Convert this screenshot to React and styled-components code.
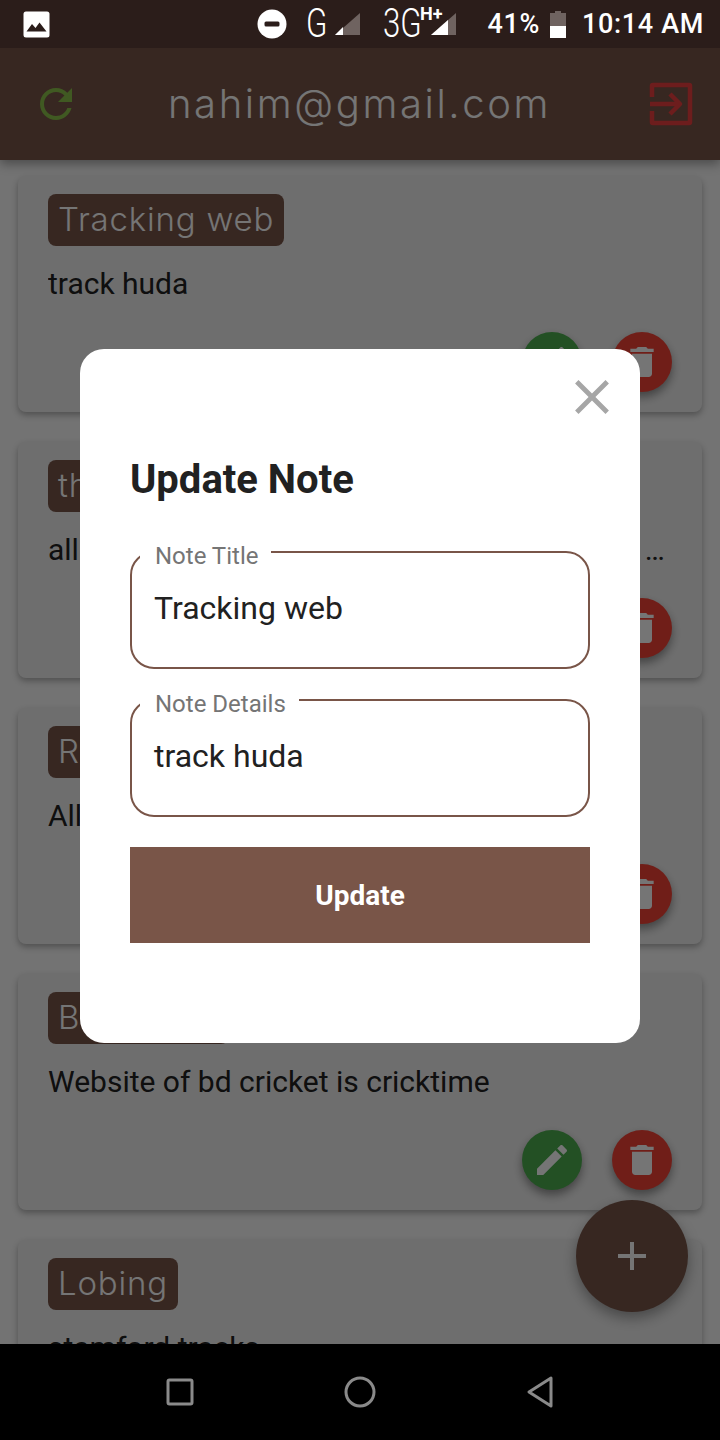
import React from "react";
import styled, { createGlobalStyle } from "styled-components";

const Global = createGlobalStyle`
  html, body { margin: 0; padding: 0; background: #000; }
  * { box-sizing: border-box; }
  body { font-family: Roboto, "Liberation Sans", sans-serif; }
`;

const Screen = styled.div`
  position: relative;
  width: 720px;
  height: 1440px;
  overflow: hidden;
  display: flex;
  flex-direction: column;
  background: #fafafa;
`;

const StatusBar = styled.div`
  position: relative;
  z-index: 3;
  flex: 0 0 48px;
  height: 48px;
  display: flex;
  align-items: center;
  padding: 0 16px 0 23px;
  background: #2b1d1a;
  color: #fff;
`;

const StatusSpacer = styled.div`
  flex: 1;
`;

const StatusSlot = styled.span`
  display: flex;
  align-items: center;
  margin-left: ${(p) => p.$ml || 0}px;
  line-height: 1;
`;

const StatusText = styled.span`
  font-size: 27px;
  font-weight: 500;
  line-height: 1;
  letter-spacing: 0.65px;
`;

const NetText = styled.span`
  display: inline-block;
  font-size: 40px;
  font-weight: 300;
  line-height: 1;
  transform: scaleX(0.78);
  transform-origin: left center;
  width: ${(p) => p.$w}px;
`;

const HPlus = styled.span`
  position: absolute;
  top: 5px;
  left: 420px;
  font-size: 18px;
  font-weight: 700;
  line-height: 1;
`;

const AppBar = styled.header`
  position: relative;
  z-index: 1;
  flex: 0 0 112px;
  display: flex;
  align-items: center;
  justify-content: space-between;
  padding: 0 27px 0 32px;
  background: #795548;
  box-shadow: 0 4px 10px rgba(0, 0, 0, 0.35);
`;

const AppTitle = styled.h1`
  margin: 0 10px 2px 0;
  font-family: Inter, "Open Sans", sans-serif;
  font-size: 40px;
  font-weight: 300;
  letter-spacing: 2.6px;
  color: #fff;
`;

const NoteList = styled.main`
  flex: 1;
  min-height: 0;
  overflow: hidden;
  display: flex;
  flex-direction: column;
  gap: 30px;
  padding: 16px 18px 0;
`;

const Card = styled.article`
  flex: 0 0 236px;
  display: flex;
  flex-direction: column;
  padding: 18px 30px 20px;
  background: #f0f0f0;
  border-radius: 8px;
  box-shadow: 0 3px 6px rgba(0, 0, 0, 0.3);
`;

const Pill = styled.div`
  align-self: flex-start;
  height: 52px;
  display: flex;
  align-items: center;
  padding: 0 10px 2px;
  border-radius: 8px;
  background: #795548;
  color: #fff;
  font-family: Inter, "Open Sans", sans-serif;
  font-size: 33px;
  font-weight: 300;
  letter-spacing: 0.8px;
`;

const NoteBody = styled.p`
  margin: 20px 0 0;
  font-size: 30px;
  line-height: 35px;
  color: #212121;
  white-space: nowrap;
  overflow: hidden;
  text-overflow: ellipsis;
`;

const CardActions = styled.div`
  margin-top: auto;
  display: flex;
  justify-content: flex-end;
  gap: 30px;
`;

const RoundButton = styled.button`
  width: 60px;
  height: 60px;
  padding: 0;
  border: 0;
  border-radius: 50%;
  display: flex;
  align-items: center;
  justify-content: center;
  color: #fff;
  background: ${(p) => p.$bg};
  box-shadow: 0 5px 10px rgba(0, 0, 0, 0.4);
`;

const Fab = styled.button`
  position: absolute;
  left: 576px;
  top: 1200px;
  width: 112px;
  height: 112px;
  padding: 0;
  border: 0;
  border-radius: 50%;
  display: flex;
  align-items: center;
  justify-content: center;
  color: #fff;
  background: #795548;
  box-shadow: 0 6px 14px rgba(0, 0, 0, 0.35);
`;

const NavBar = styled.nav`
  position: relative;
  z-index: 3;
  flex: 0 0 96px;
  display: flex;
  align-items: center;
  justify-content: center;
  gap: 150px;
  background: #000;
  color: #8a8a8a;
`;

const Overlay = styled.div`
  position: absolute;
  inset: 0;
  z-index: 2;
  display: flex;
  align-items: center;
  justify-content: center;
  padding: 48px 0 96px;
  background: rgba(0, 0, 0, 0.54);
`;

const Modal = styled.section`
  width: 560px;
  height: 694px;
  display: flex;
  flex-direction: column;
  padding: 19px 50px 0;
  background: #fff;
  border-radius: 24px;
`;

const CloseRow = styled.div`
  display: flex;
  justify-content: flex-end;
  margin-right: -31px;
  color: #a6a6a6;
`;

const ModalTitle = styled.h2`
  margin: 31px 0 0;
  font-size: 40px;
  line-height: 46px;
  font-weight: 700;
  color: #212121;
`;

const Field = styled.fieldset`
  margin: ${(p) => p.$mt}px 0 0;
  padding: 0 22px;
  height: 135px;
  border: 2px solid #795548;
  border-radius: 24px;
  min-width: 0;
`;

const FieldLabel = styled.legend`
  margin-left: -14px;
  padding: 9px 13px 0 15px;
  font-size: 24px;
  line-height: 26px;
  color: #757575;
`;

const FieldValue = styled.div`
  margin-top: 20px;
  font-size: 32px;
  line-height: 38px;
  color: #212121;
`;

const UpdateButton = styled.button`
  margin-top: 30px;
  height: 96px;
  border: 0;
  background: #795548;
  color: #fff;
  font-family: inherit;
  font-size: 28px;
  font-weight: 700;
`;

const Md = ({ d, size, color }) => (
  <svg width={size} height={size} viewBox="0 0 24 24" fill={color || "currentColor"}>
    <path d={d} />
  </svg>
);

const EDIT = "M3 17.25V21h3.75L17.81 9.94l-3.75-3.75L3 17.25zM20.71 7.04c.39-.39.39-1.02 0-1.41l-2.34-2.34c-.39-.39-1.02-.39-1.41 0l-1.83 1.83 3.75 3.75 1.83-1.83z";
const TRASH = "M6 19c0 1.1.9 2 2 2h8c1.1 0 2-.9 2-2V7H6v12zM19 4h-3.5l-1-1h-5l-1 1H5v2h14V4z";
const PLUS = "M19 13h-6v6h-2v-6H5v-2h6V5h2v6h6v2z";
const CLOSE = "M19 6.41L17.59 5 12 10.59 6.41 5 5 6.41 10.59 12 5 17.59 6.41 19 12 13.41 17.59 19 19 17.59 13.41 12z";
const REFRESH = "M17.65 6.35C16.2 4.9 14.21 4 12 4c-4.42 0-7.99 3.58-7.99 8s3.57 8 7.99 8c3.73 0 6.84-2.55 7.73-6h-2.08c-.82 2.33-3.04 4-5.65 4-3.31 0-6-2.69-6-6s2.69-6 6-6c1.66 0 3.14.69 4.22 1.78L13 11h7V4l-2.35 2.35z";

const ImageIcon = () => (
  <svg width="27" height="27" viewBox="0 0 27 27">
    <rect x="0.5" y="0.5" width="26" height="26" rx="2.5" fill="#fff" />
    <path d="M3.5 20.5 L9 13 L12.5 17 L16.5 11.5 L23.5 20.5 Z" fill="#2b1d1a" />
  </svg>
);

const DndIcon = () => (
  <svg width="30" height="30" viewBox="0 0 30 30">
    <circle cx="15" cy="15" r="14.5" fill="#fff" />
    <rect x="7.5" y="12.5" width="15" height="5" rx="1.5" fill="#2b1d1a" />
  </svg>
);

const SignalIcon = ({ level }) => (
  <svg width="27" height="24" viewBox="0 0 27 24">
    <path d="M26 1 V23 H1 Z" fill="#6f6360" />
    <path d={level === "low" ? "M9 15 V23 H1 Z" : "M18 8 V23 H1 Z"} fill="#fff" />
  </svg>
);

const BatteryIcon = () => (
  <svg width="16" height="27" viewBox="0 0 16 27">
    <path d="M5 0 H11 V2 H16 V27 H0 V2 H5 Z" fill="#6f6360" />
    <rect x="0" y="15" width="16" height="12" fill="#fff" />
  </svg>
);

const ExitIcon = () => (
  <svg width="44" height="44" viewBox="0 0 44 44" fill="none" stroke="#ee3f3f" strokeWidth="4.5" strokeLinejoin="round">
    <path d="M3 15 V4 Q3 3 4 3 H40 Q41 3 41 4 V40 Q41 41 40 41 H4 Q3 41 3 40 V29" />
    <path d="M1 22 H30 M21 12 L31 22 L21 32" />
  </svg>
);

const NavSquare = () => (
  <svg width="28" height="28" viewBox="0 0 28 28" fill="none" stroke="currentColor" strokeWidth="3">
    <rect x="2" y="2" width="24" height="24" rx="1.5" />
  </svg>
);
const NavCircle = () => (
  <svg width="32" height="32" viewBox="0 0 32 32" fill="none" stroke="currentColor" strokeWidth="3">
    <circle cx="16" cy="16" r="14" />
  </svg>
);
const NavBack = () => (
  <svg width="28" height="32" viewBox="0 0 28 32" fill="none" stroke="currentColor" strokeWidth="3" strokeLinejoin="round">
    <path d="M25 2 V30 L3 16 Z" />
  </svg>
);

const notes = [
  { title: "Tracking web", body: "track huda" },
  { title: "this is the note", body: "all of the important things are written down I\u00a0 Wonderful" },
  { title: "Rifat", body: "All" },
  { title: "Bd cricket", body: "Website of bd cricket is cricktime" },
  { title: "Lobing", body: "stamford tracks" },
];

export default function App() {
  return (
    <Screen>
      <Global />
      <StatusBar>
        <ImageIcon />
        <StatusSpacer />
        <DndIcon />
        <StatusSlot $ml={19}><NetText $w={23}>G</NetText></StatusSlot>
        <StatusSlot $ml={5}><SignalIcon level="low" /></StatusSlot>
        <StatusSlot $ml={22}><NetText $w={42}>3G</NetText></StatusSlot>
        <HPlus>H+</HPlus>
        <StatusSlot $ml={5}><SignalIcon level="high" /></StatusSlot>
        <StatusSlot $ml={31}><StatusText>41%</StatusText></StatusSlot>
        <StatusSlot $ml={10}><BatteryIcon /></StatusSlot>
        <StatusSlot $ml={16}><StatusText>10:14 AM</StatusText></StatusSlot>
      </StatusBar>

      <AppBar>
        <Md d={REFRESH} size={48} color="#8bc34a" />
        <AppTitle>nahim@gmail.com</AppTitle>
        <ExitIcon />
      </AppBar>

      <NoteList>
        {notes.map((n) => (
          <Card key={n.title}>
            <Pill>{n.title}</Pill>
            <NoteBody>{n.body}</NoteBody>
            <CardActions>
              <RoundButton $bg="#4caf50"><Md d={EDIT} size={40} /></RoundButton>
              <RoundButton $bg="#f44336"><Md d={TRASH} size={40} /></RoundButton>
            </CardActions>
          </Card>
        ))}
      </NoteList>

      <Fab><Md d={PLUS} size={48} /></Fab>

      <NavBar>
        <NavSquare />
        <NavCircle />
        <NavBack />
      </NavBar>

      <Overlay>
        <Modal>
          <CloseRow><Md d={CLOSE} size={58} /></CloseRow>
          <ModalTitle>Update Note</ModalTitle>
          <Field $mt={31}>
            <FieldLabel>Note Title</FieldLabel>
            <FieldValue>Tracking web</FieldValue>
          </Field>
          <Field $mt={13}>
            <FieldLabel>Note Details</FieldLabel>
            <FieldValue>track huda</FieldValue>
          </Field>
          <UpdateButton>Update</UpdateButton>
        </Modal>
      </Overlay>
    </Screen>
  );
}
